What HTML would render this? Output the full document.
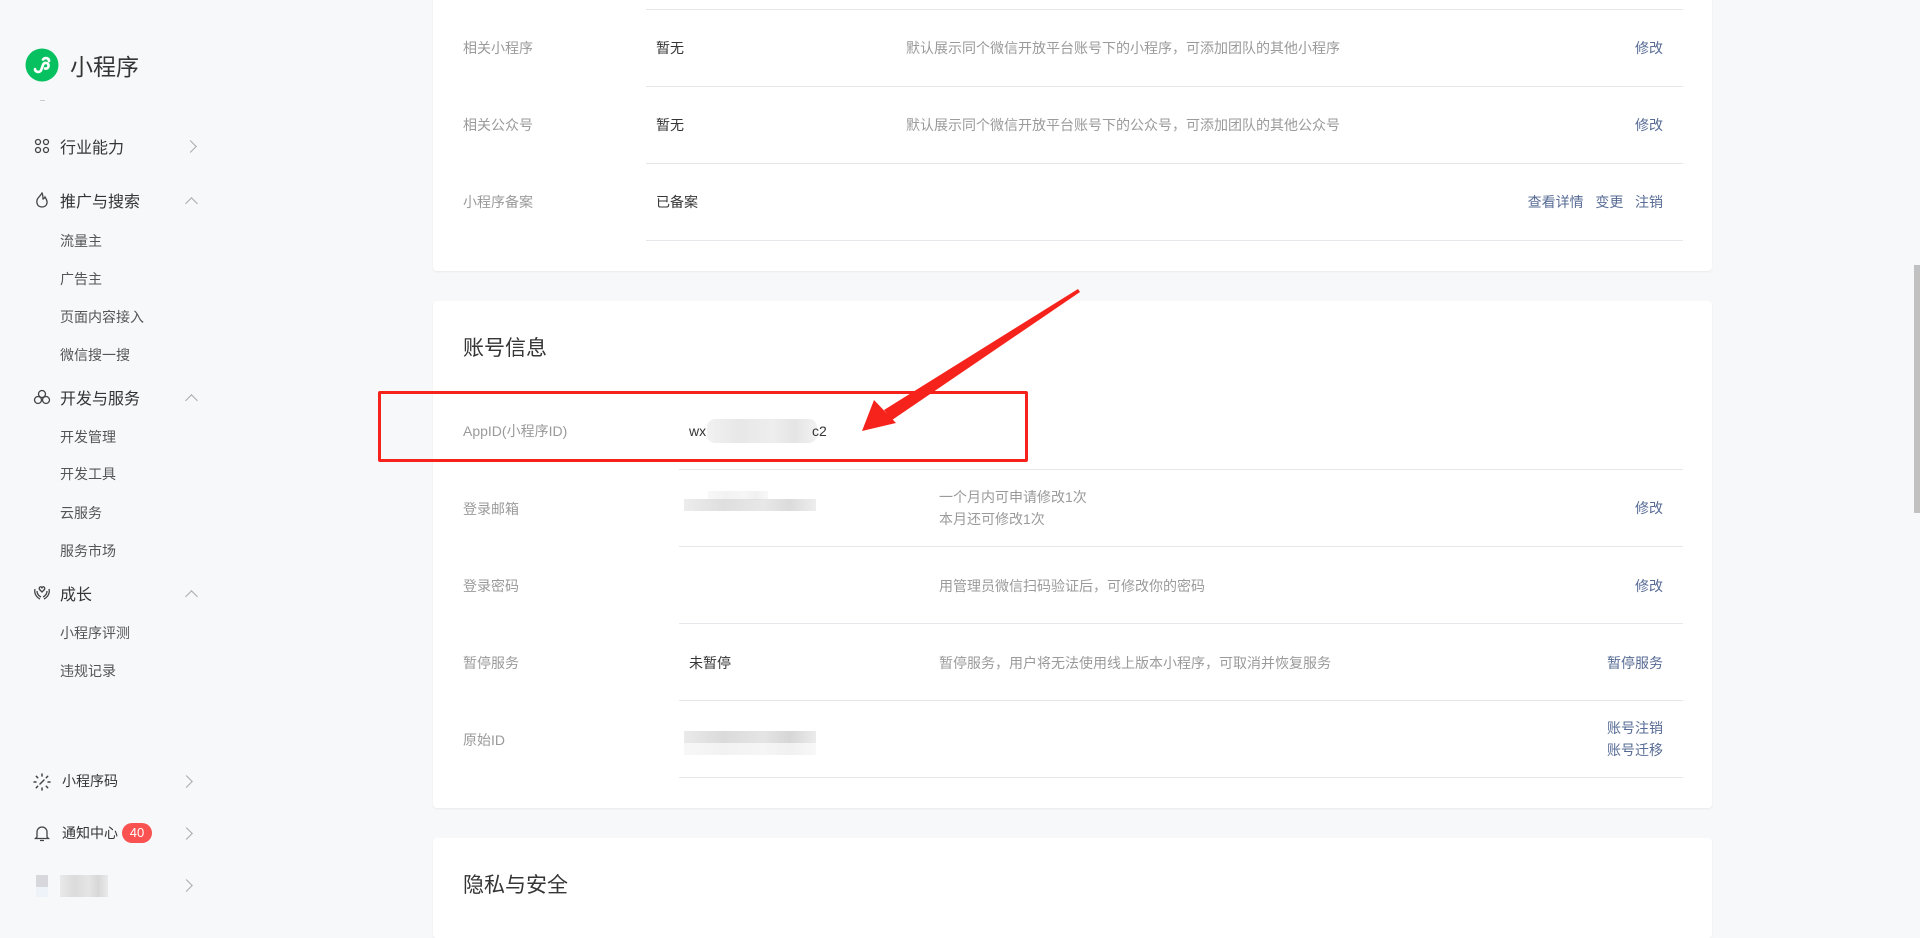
<!DOCTYPE html>
<html><head><meta charset="utf-8"><style>
*{margin:0;padding:0;box-sizing:border-box}
body{width:1920px;height:919px;overflow:hidden;background:#f7f8fa;font-family:"Liberation Sans","Noto Sans CJK SC",sans-serif;position:relative;color:#353535}
.a{position:absolute;white-space:nowrap}
.g{font-size:16px;color:#353535;transform:translateY(-50%)}
.i{font-size:14px;color:#555;transform:translateY(-50%)}
.card{position:absolute;left:433px;width:1279px;background:#fff;border-radius:4px;box-shadow:0 1px 2px rgba(0,0,0,.06)}
.ln{position:absolute;height:1px;background:#e7e7eb}
.lb{font-size:14px;color:#9a9a9a;transform:translateY(-50%)}
.v{font-size:14px;color:#353535;transform:translateY(-50%)}
.d{font-size:14px;color:#9a9a9a;transform:translateY(-50%)}
.k{font-size:14px;color:#576b95;transform:translateY(-50%)}
.r{right:257px}
.blur{position:absolute;background:linear-gradient(90deg,#e6e6e6,#d4d4d4 30%,#e0e0e0 60%,#cfcfcf 80%,#e8e8e8)}
.ch{position:absolute;width:9px;height:9px;border-right:1.5px solid #aaa;border-top:1.5px solid #aaa}
</style></head><body>
<!-- sidebar -->
<svg class="a" style="left:25px;top:48px" width="34" height="34" viewBox="0 0 34 34"><circle cx="17" cy="17" r="16.5" fill="#07c160"/><path d="M10 21c0 3 4 4 6 1.5l2-5.5c1-3 5-2.5 5.5 0 .5 3-2 4-3.5 3.5M24 13c0-3-4-4-6-1.5" stroke="#fff" stroke-width="2.6" fill="none" stroke-linecap="round"/></svg>
<div class="a" style="left:70px;top:65px;transform:translateY(-50%);font-size:23px;color:#353535">小程序</div>
<div class="a" style="left:40px;top:100px;width:5px;height:1px;background:#ccc"></div>
<svg class="a" style="left:34px;top:138px" width="16" height="16" viewBox="0 0 16 16" fill="none" stroke="#444" stroke-width="1.3"><circle cx="4" cy="4" r="2.5"/><circle cx="12" cy="4" r="2.5"/><circle cx="4" cy="12" r="2.5"/><circle cx="12" cy="12" r="2.5"/></svg>
<div class="a g" style="left:60px;top:146px">行业能力</div><div class="ch" style="left:186px;top:142px;transform:rotate(45deg)"></div>
<svg class="a" style="left:35px;top:192px" width="14" height="16" viewBox="0 0 14 16" fill="none" stroke="#444" stroke-width="1.3"><path d="M7 1C5 5 1 6 2 11c.5 3 3 4 5 4s4.5-1 5-4c.5-3-1.5-5-2-6-1 2-2 2-2 2C8 5 8 3 7 1z"/></svg>
<div class="a g" style="left:60px;top:200px">推广与搜索</div><div class="ch" style="left:187px;top:199px;transform:rotate(-45deg)"></div>
<div class="a i" style="left:60px;top:241px">流量主</div>
<div class="a i" style="left:60px;top:279px">广告主</div>
<div class="a i" style="left:60px;top:317px">页面内容接入</div>
<div class="a i" style="left:60px;top:355px">微信搜一搜</div>
<svg class="a" style="left:33px;top:389px" width="18" height="16" viewBox="0 0 18 16" fill="none" stroke="#444" stroke-width="1.3"><circle cx="9" cy="5" r="3.5"/><circle cx="5" cy="11" r="3.5"/><circle cx="13" cy="11" r="3.5"/></svg>
<div class="a g" style="left:60px;top:397px">开发与服务</div><div class="ch" style="left:187px;top:396px;transform:rotate(-45deg)"></div>
<div class="a i" style="left:60px;top:437px">开发管理</div>
<div class="a i" style="left:60px;top:474px">开发工具</div>
<div class="a i" style="left:60px;top:513px">云服务</div>
<div class="a i" style="left:60px;top:551px">服务市场</div>
<svg class="a" style="left:33px;top:585px" width="18" height="16" viewBox="0 0 18 16" fill="none" stroke="#444" stroke-width="1.3"><path d="M9 7C7 5 5.5 4 6.5 2.5S9 2 9 3.5c0-1.5 1.5-2.5 2.5-1S11 5 9 7zM2 4c-1 4 1 8 5 10M16 4c1 4-1 8-5 10M4 6c0 3 2 5 4 6M14 6c0 3-2 5-4 6"/></svg>
<div class="a g" style="left:60px;top:593px">成长</div><div class="ch" style="left:187px;top:592px;transform:rotate(-45deg)"></div>
<div class="a i" style="left:60px;top:633px">小程序评测</div>
<div class="a i" style="left:60px;top:671px">违规记录</div>
<svg class="a" style="left:33px;top:773px" width="18" height="18" viewBox="0 0 18 18" stroke="#444" stroke-width="1.5" stroke-linecap="round"><path d="M9 1v2M9 15v2M1 9h2M15 9h2M3.3 3.3l1.4 1.4M13.3 13.3l1.4 1.4M3.3 14.7l1.4-1.4M13.3 4.7l1.4-1.4M7 11l4-4"/></svg>
<div class="a i" style="left:62px;top:781px;color:#353535">小程序码</div><div class="ch" style="left:182px;top:777px;transform:rotate(45deg)"></div>
<svg class="a" style="left:34px;top:824px" width="16" height="18" viewBox="0 0 16 18" fill="none" stroke="#444" stroke-width="1.3"><path d="M3 13V8a5 5 0 0110 0v5l1.5 1.5h-13zM6 16.5h4"/></svg>
<div class="a i" style="left:62px;top:833px;color:#353535">通知中心</div>
<div class="a" style="left:122px;top:823px;width:30px;height:20px;border-radius:10px;background:#fa5151;color:#fff;font-size:13px;line-height:20px;text-align:center">40</div>
<div class="ch" style="left:182px;top:829px;transform:rotate(45deg)"></div>
<div class="a" style="left:36px;top:875px;width:12px;height:12px;background:#d8d8dc"></div><div class="a" style="left:36px;top:887px;width:12px;height:10px;background:#eef3fa"></div>
<div class="blur" style="left:60px;top:875px;width:48px;height:22px;opacity:.8"></div>
<div class="ch" style="left:182px;top:881px;transform:rotate(45deg)"></div>

<!-- card1 -->
<div class="card" style="top:-10px;height:281px"></div>
<div class="ln" style="left:646px;width:1037px;top:9px"></div>
<div class="ln" style="left:646px;width:1037px;top:86px"></div>
<div class="ln" style="left:646px;width:1037px;top:163px"></div>
<div class="ln" style="left:646px;width:1037px;top:240px"></div>
<div class="a lb" style="left:463px;top:48px">相关小程序</div><div class="a v" style="left:656px;top:48px">暂无</div>
<div class="a d" style="left:906px;top:48px">默认展示同个微信开放平台账号下的小程序，可添加团队的其他小程序</div><div class="a k r" style="top:48px">修改</div>
<div class="a lb" style="left:463px;top:125px">相关公众号</div><div class="a v" style="left:656px;top:125px">暂无</div>
<div class="a d" style="left:906px;top:125px">默认展示同个微信开放平台账号下的公众号，可添加团队的其他公众号</div><div class="a k r" style="top:125px">修改</div>
<div class="a lb" style="left:463px;top:202px">小程序备案</div><div class="a v" style="left:656px;top:202px">已备案</div>
<div class="a k r" style="top:202px">查看详情&nbsp;&nbsp;&nbsp;变更&nbsp;&nbsp;&nbsp;注销</div>

<!-- card2 -->
<div class="card" style="top:301px;height:507px"></div>
<div class="a" style="left:463px;top:347px;transform:translateY(-50%);font-size:21px;color:#353535">账号信息</div>
<div class="a lb" style="left:463px;top:431px">AppID(小程序ID)</div>
<div class="a v" style="left:689px;top:431px">wx</div>
<div class="blur" style="left:707px;top:419px;width:110px;height:24px;border-radius:8px;opacity:.55"></div>
<div class="a v" style="left:812px;top:431px">c2</div>
<div class="a" style="left:378px;top:391px;width:650px;height:71px;border:3px solid #f5231c;border-radius:2px"></div>
<svg class="a" style="left:0;top:0" width="1920" height="919"><polygon points="1078,289 1080,292 892,420 884,410" fill="#f5231c"/><polygon points="862,431 874,400 896,423" fill="#f5231c"/></svg>
<div class="ln" style="left:679px;width:1004px;top:469px"></div>
<div class="ln" style="left:679px;width:1004px;top:546px"></div>
<div class="ln" style="left:679px;width:1004px;top:623px"></div>
<div class="ln" style="left:679px;width:1004px;top:700px"></div>
<div class="ln" style="left:679px;width:1004px;top:777px"></div>
<div class="a lb" style="left:463px;top:509px">登录邮箱</div>
<div class="blur" style="left:684px;top:499px;width:132px;height:12px;opacity:.75"></div><div class="blur" style="left:708px;top:491px;width:60px;height:9px;opacity:.3"></div>
<div class="a d" style="left:939px;top:497px">一个月内可申请修改1次</div><div class="a d" style="left:939px;top:519px">本月还可修改1次</div>
<div class="a k r" style="top:508px">修改</div>
<div class="a lb" style="left:463px;top:586px">登录密码</div>
<div class="a d" style="left:939px;top:586px">用管理员微信扫码验证后，可修改你的密码</div><div class="a k r" style="top:586px">修改</div>
<div class="a lb" style="left:463px;top:663px">暂停服务</div><div class="a v" style="left:689px;top:663px">未暂停</div>
<div class="a d" style="left:939px;top:663px">暂停服务，用户将无法使用线上版本小程序，可取消并恢复服务</div><div class="a k r" style="top:663px">暂停服务</div>
<div class="a lb" style="left:463px;top:740px">原始ID</div>
<div class="blur" style="left:684px;top:731px;width:132px;height:12px;opacity:.85"></div><div class="blur" style="left:684px;top:743px;width:132px;height:12px;opacity:.3"></div>
<div class="a k r" style="top:728px">账号注销</div><div class="a k r" style="top:750px">账号迁移</div>

<!-- card3 -->
<div class="card" style="top:838px;height:100px"></div>
<div class="a" style="left:463px;top:884px;transform:translateY(-50%);font-size:21px;color:#353535">隐私与安全</div>

<div class="a" style="left:1914px;top:265px;width:6px;height:248px;background:#c1c1c1"></div>
</body></html>
